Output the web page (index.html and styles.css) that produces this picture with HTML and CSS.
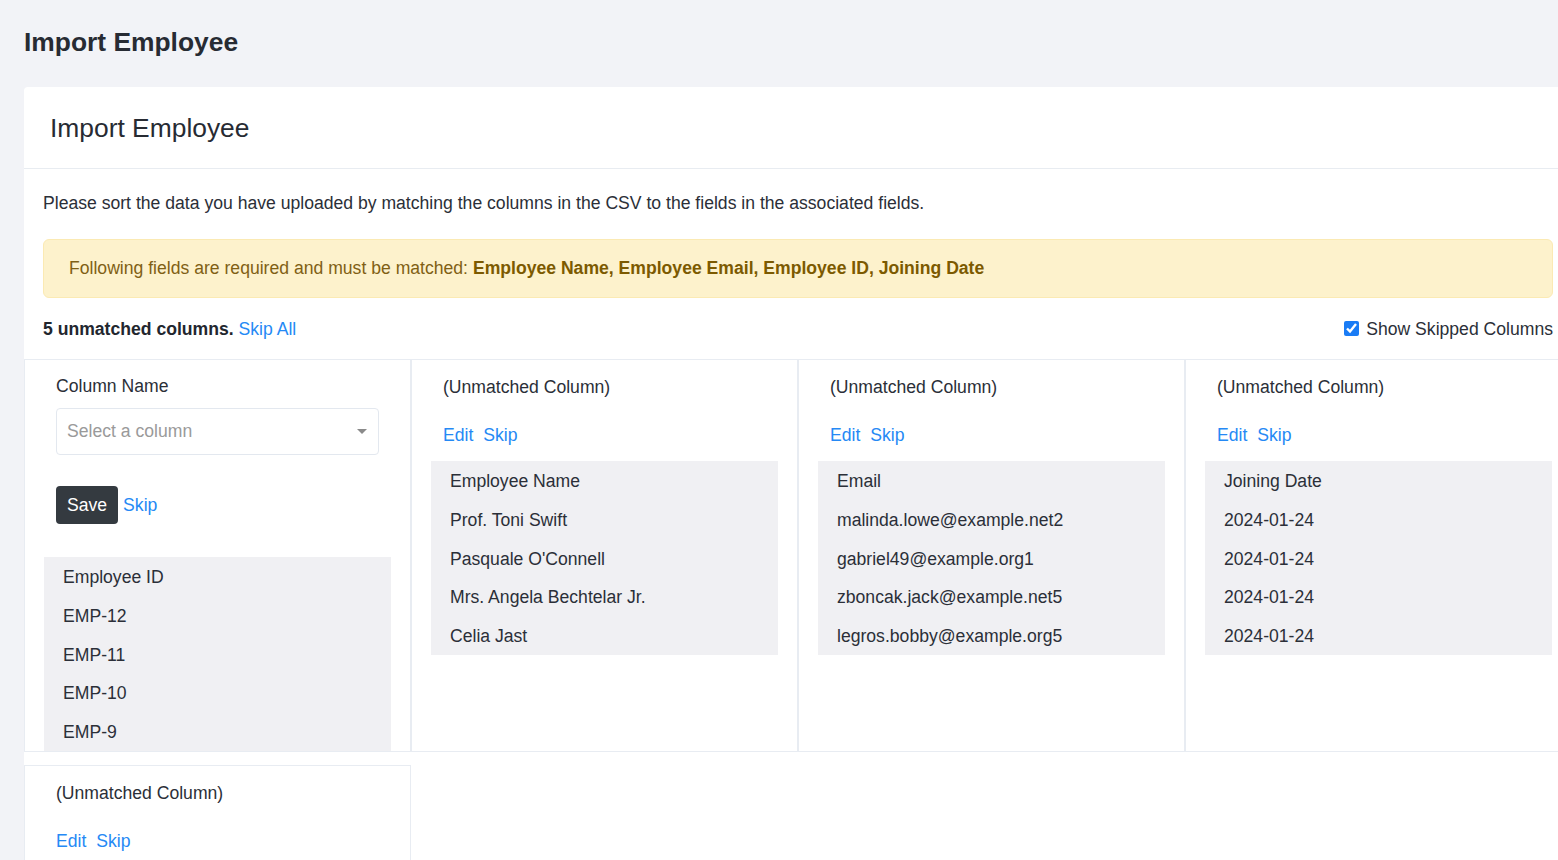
FILE: index.html
```html
<!DOCTYPE html>
<html lang="en">
<head>
<meta charset="utf-8">
<title>Import Employee</title>
<link rel="stylesheet" href="styles.css">
</head>
<body>
<div class="page">
  <h1 class="page-title">Import Employee</h1>
  <div class="card">
    <div class="card-header">
      <h2 class="card-title">Import Employee</h2>
    </div>
    <div class="card-body">
      <p class="intro">Please sort the data you have uploaded by matching the columns in the CSV to the fields in the associated fields.</p>
      <div class="alert">Following fields are required and must be matched: <strong>Employee Name, Employee Email, Employee ID, Joining Date</strong></div>
      <div class="toolbar">
        <div class="summary"><strong>5 unmatched columns.</strong> <a class="link" href="#">Skip All</a></div>
        <label class="toggle"><input type="checkbox" class="toggle-box" checked> Show Skipped Columns</label>
      </div>
    </div>
    <div class="columns">
      <div class="col-box">
        <div class="col-head">
          <div class="col-label">Column Name</div>
          <div class="select">
            <span class="select-placeholder">Select a column</span>
            <span class="select-caret"></span>
          </div>
          <div class="save-row"><button class="btn-save">Save</button> <a class="link" href="#">Skip</a></div>
        </div>
        <div class="data edit-data">
          <div class="data-row">Employee ID</div>
          <div class="data-row">EMP-12</div>
          <div class="data-row">EMP-11</div>
          <div class="data-row">EMP-10</div>
          <div class="data-row">EMP-9</div>
        </div>
      </div>
      <div class="col-box">
        <div class="col-head">
          <div class="col-title">(Unmatched Column)</div>
          <div class="col-actions"><a class="link" href="#">Edit</a><a class="link" href="#">Skip</a></div>
        </div>
        <div class="data">
          <div class="data-row">Employee Name</div>
          <div class="data-row">Prof. Toni Swift</div>
          <div class="data-row">Pasquale O'Connell</div>
          <div class="data-row">Mrs. Angela Bechtelar Jr.</div>
          <div class="data-row">Celia Jast</div>
        </div>
      </div>
      <div class="col-box">
        <div class="col-head">
          <div class="col-title">(Unmatched Column)</div>
          <div class="col-actions"><a class="link" href="#">Edit</a><a class="link" href="#">Skip</a></div>
        </div>
        <div class="data">
          <div class="data-row">Email</div>
          <div class="data-row">malinda.lowe@example.net2</div>
          <div class="data-row">gabriel49@example.org1</div>
          <div class="data-row">zboncak.jack@example.net5</div>
          <div class="data-row">legros.bobby@example.org5</div>
        </div>
      </div>
      <div class="col-box">
        <div class="col-head">
          <div class="col-title">(Unmatched Column)</div>
          <div class="col-actions"><a class="link" href="#">Edit</a><a class="link" href="#">Skip</a></div>
        </div>
        <div class="data">
          <div class="data-row">Joining Date</div>
          <div class="data-row">2024-01-24</div>
          <div class="data-row">2024-01-24</div>
          <div class="data-row">2024-01-24</div>
          <div class="data-row">2024-01-24</div>
        </div>
      </div>
      <div class="col-box">
        <div class="col-head">
          <div class="col-title">(Unmatched Column)</div>
          <div class="col-actions"><a class="link" href="#">Edit</a><a class="link" href="#">Skip</a></div>
        </div>
        <div class="data">
          <div class="data-row">Department</div>
          <div class="data-row">Sales</div>
          <div class="data-row">Sales</div>
          <div class="data-row">Sales</div>
          <div class="data-row">Sales</div>
        </div>
      </div>
    </div>
  </div>
</div>
</body>
</html>
```

FILE: styles.css
```css
html {
  overflow: hidden;
}

body {
  margin: 0;
  background: #f2f3f7;
  font-family: "Liberation Sans", Arial, Helvetica, sans-serif;
  font-size: 17.6px;
  line-height: 25px;
  color: #2b2f38;
}

.page {
  width: 1548px;
  padding: 24px 24px 40px 24px;
}

.page-title {
  margin: 0 0 27px 0;
  font-size: 26.4px;
  line-height: 36px;
  font-weight: 700;
  color: #272b33;
}

.card {
  background: #ffffff;
  border-radius: 4px;
}

.card-header {
  height: 81px;
  display: flex;
  align-items: center;
  padding: 0 26px;
  border-bottom: 1px solid #e8ecf1;
}

.card-title {
  margin: 0;
  font-size: 26.4px;
  line-height: 34px;
  font-weight: 400;
  color: #272b33;
}

.card-body {
  padding: 22px 19px 17px 19px;
}

.intro {
  margin: 0 0 23px 0;
}

.alert {
  padding: 16px 25px;
  border: 1px solid #fbeab3;
  border-radius: 6px;
  background: #fdf2cc;
  color: #806014;
}

.alert strong {
  color: #7c5a00;
}

.toolbar {
  margin-top: 19px;
  display: flex;
  justify-content: space-between;
  align-items: center;
}

.summary strong {
  font-weight: 700;
  color: #22262e;
}

.link {
  color: #2589f5;
  text-decoration: none;
}

.toggle {
  display: flex;
  align-items: center;
  gap: 7px;
}

.toggle-box {
  width: 15px;
  height: 15px;
  margin: 0;
  accent-color: #1a7cf5;
  position: relative;
  top: -1px;
}

.columns {
  display: flex;
  flex-wrap: wrap;
}

.col-box {
  width: 387px;
  box-sizing: border-box;
  border: 1px solid #e8ecf2;
  padding: 0 19px;
  margin-bottom: 13px;
}

.col-head {
  padding: 15px 12px 0 12px;
}

.col-label {
  margin-top: -1px;
}

.select {
  margin-top: 9px;
  height: 47px;
  box-sizing: border-box;
  border: 1px solid #e3e8ef;
  border-radius: 4px;
  display: flex;
  align-items: center;
  justify-content: space-between;
  padding: 0 11px 0 10px;
}

.select-placeholder {
  color: #9a9a9a;
}

.select-caret {
  width: 0;
  height: 0;
  border-left: 5px solid transparent;
  border-right: 5px solid transparent;
  border-top: 5px solid #8a8a8a;
}

.save-row {
  margin-top: 31px;
  display: flex;
  align-items: center;
  gap: 5px;
}

.btn-save {
  height: 38px;
  padding: 0 11px;
  border: 0;
  border-radius: 4px;
  background: #343a40;
  color: #ffffff;
  font-family: inherit;
  font-size: 17.6px;
}

.col-actions {
  margin-top: 23px;
  display: flex;
  gap: 10px;
}

.data {
  background: #f0f0f3;
}

.col-head + .data {
  margin-top: 13px;
}

.col-head + .edit-data {
  margin-top: 33px;
}

.data-row {
  height: 38.75px;
  line-height: 41px;
  padding: 0 19px;
}
```
